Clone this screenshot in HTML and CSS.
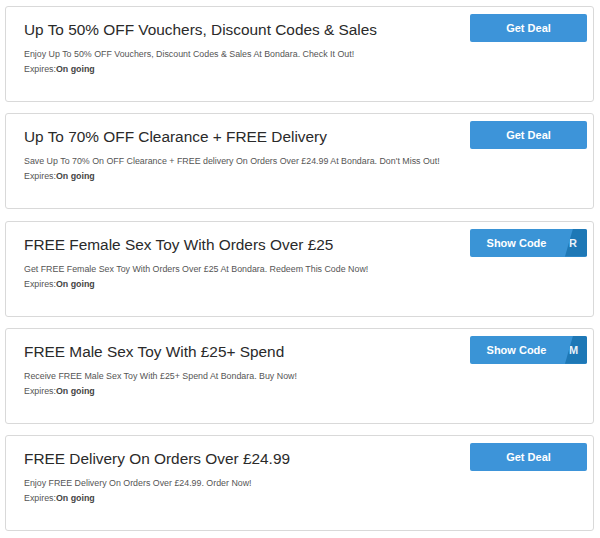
FILE: index.html
```html
<!DOCTYPE html>
<html>
<head>
<meta charset="utf-8">
<link rel="stylesheet" href="styles.css">
</head>
<body>
<div class="list">
  <div class="card">
    <div class="info">
      <h3 class="title">Up To 50% OFF Vouchers, Discount Codes &amp; Sales</h3>
      <p class="desc">Enjoy Up To 50% OFF Vouchers, Discount Codes &amp; Sales At Bondara. Check It Out!</p>
      <p class="exp">Expires:<b>On going</b></p>
    </div>
    <a class="btn">Get Deal</a>
  </div>
  <div class="card">
    <div class="info">
      <h3 class="title">Up To 70% OFF Clearance + FREE Delivery</h3>
      <p class="desc">Save Up To 70% On OFF Clearance + FREE delivery On Orders Over £24.99 At Bondara. Don't Miss Out!</p>
      <p class="exp">Expires:<b>On going</b></p>
    </div>
    <a class="btn">Get Deal</a>
  </div>
  <div class="card">
    <div class="info">
      <h3 class="title">FREE Female Sex Toy With Orders Over £25</h3>
      <p class="desc">Get FREE Female Sex Toy With Orders Over £25 At Bondara. Redeem This Code Now!</p>
      <p class="exp">Expires:<b>On going</b></p>
    </div>
    <a class="btn code"><span class="peek">R</span><span class="label">Show Code</span></a>
  </div>
  <div class="card">
    <div class="info">
      <h3 class="title">FREE Male Sex Toy With £25+ Spend</h3>
      <p class="desc">Receive FREE Male Sex Toy With £25+ Spend At Bondara. Buy Now!</p>
      <p class="exp">Expires:<b>On going</b></p>
    </div>
    <a class="btn code"><span class="peek">M</span><span class="label">Show Code</span></a>
  </div>
  <div class="card">
    <div class="info">
      <h3 class="title">FREE Delivery On Orders Over £24.99</h3>
      <p class="desc">Enjoy FREE Delivery On Orders Over £24.99. Order Now!</p>
      <p class="exp">Expires:<b>On going</b></p>
    </div>
    <a class="btn">Get Deal</a>
  </div>
</div>
</body>
</html>
```
FILE: styles.css
```css
html, body {
  margin: 0;
  padding: 0;
  background: #fff;
}
body {
  font-family: "Liberation Sans", Arial, sans-serif;
  color: #333;
}
.list {
  display: flex;
  flex-direction: column;
  gap: 11.25px;
  padding: 6px 6px 0 5px;
}
.card {
  box-sizing: border-box;
  display: flex;
  align-items: flex-start;
  height: 96px;
  border: 1px solid #d9d9d9;
  border-radius: 3px;
  padding: 7px 6px 0 18px;
}
.info {
  flex: 1;
  padding-top: 7px;
}
.title {
  margin: 0;
  font-size: 15.4px;
  font-weight: normal;
  line-height: 18px;
  color: #2a2a2a;
}
.desc {
  margin: 9px 0 0;
  font-size: 8.85px;
  line-height: 12px;
  color: #555;
}
.exp {
  margin: 3px 0 0;
  font-size: 8.85px;
  line-height: 12px;
  color: #555;
}
.exp b {
  color: #444;
}
.btn {
  position: relative;
  overflow: hidden;
  flex: none;
  width: 117px;
  height: 28px;
  background: #3d94d9;
  border-radius: 2px;
  color: #fff;
  font-size: 11px;
  font-weight: bold;
  line-height: 28px;
  text-align: center;
}
.btn.code {
  background: #3a94d6;
}
.label {
  position: relative;
  margin-right: 24px;
}
.peek {
  position: absolute;
  top: 0;
  right: 0;
  width: 22px;
  height: 28px;
  background: #1e78b6;
  clip-path: polygon(8px 0, 100% 0, 100% 100%, 0 100%);
  text-align: left;
  padding-left: 4px;
  box-sizing: border-box;
  color: #e8f2fa;
}
```
